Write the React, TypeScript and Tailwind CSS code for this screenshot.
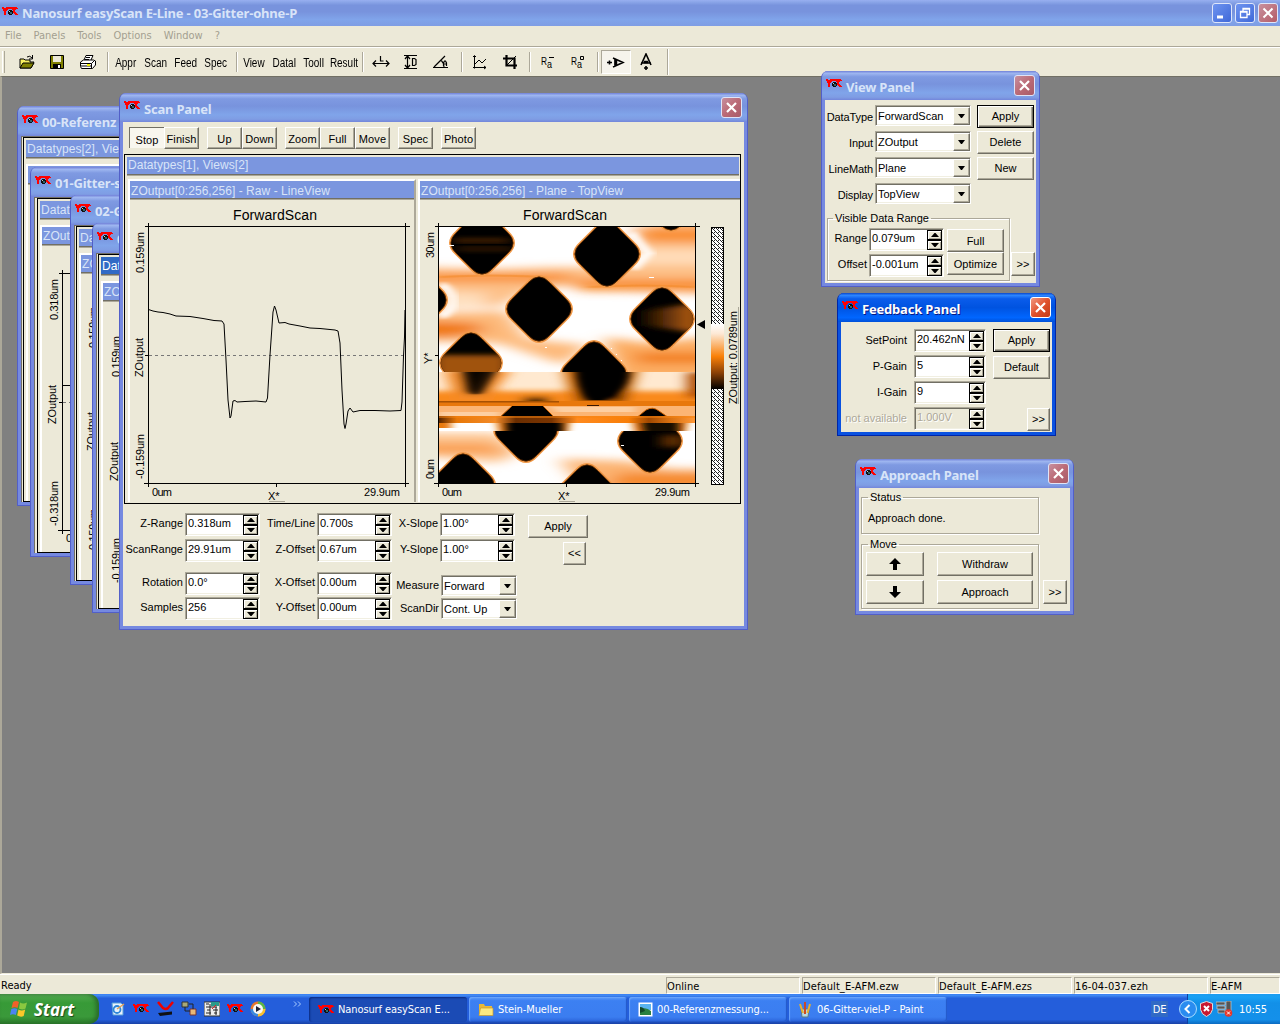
import React from 'react';

const MS = 'font-[Liberation_Sans,Arial,sans-serif]';

function Logo({ className = '' }: { className?: string }) {
  return (
    <svg width="16" height="12" viewBox="0 0 16 12" shapeRendering="crispEdges" className={'shrink-0 ' + className}>
      <path d="M0 1h2v1h2V1h11v1h1v1h-2v1h-1v2h1v1h1v1h1v1h-3V8h-1V7h-1V4h-1V3H6v1H5v1H4v4H2V5H1V3H0z" fill="#f00" />
      <path d="M6 5h1V4h3v1h1v3h-1v1H7V8H6z" fill="#111" />
      <path d="M8 6h2v2H8z" fill="#2f6570" />
      <path d="M7 5h1v1H7z" fill="#ccc" />
    </svg>
  );
}

function Close({ active = false }: { active?: boolean }) {
  return (
    <span className={'flex h-[21px] w-[21px] shrink-0 items-center justify-center rounded-[3px] border ' + (active ? 'border-white bg-linear-to-br from-[#f0977f] via-[#e0512c] to-[#c23a14]' : 'border-[#dfe3f7] bg-linear-to-br from-[#c68f9f] via-[#bb6a76] to-[#a85b68]')}>
      <svg width="13" height="13" viewBox="0 0 13 13"><path d="M2 2l9 9M11 2l-9 9" stroke="#fff" strokeWidth="2.200" /></svg>
    </span>
  );
}

type WinProps = { title: string; box: string; active?: boolean; head: string; close?: boolean; children?: React.ReactNode };
function Win({ title, box, active = false, head, close = true, children }: WinProps) {
  return (
    <section className={'absolute flex flex-col overflow-hidden rounded-t-[7px] border-x border-b px-[3px] pb-[3px] ' + box + (active ? ' border-[#0026a8] bg-[#0a52e0]' : ' border-[#525fc8] bg-[#7589e0]')}>
      <header className={'-mx-[3px] flex shrink-0 items-center pl-1 pr-1 ' + head + (active ? ' bg-[linear-gradient(#0a46c8,#2d86ff_8%,#0a5ceb_20%,#0053e0_50%,#0066ff_85%,#0050d8)]' : ' bg-[linear-gradient(#7080d8,#9eb6f0_8%,#7f9ae2_20%,#7893dd_45%,#80a4ea_75%,#7f9de4_90%,#7386da)]')}>
        <Logo className="-mt-[3px]" />
        <h2 className={'ml-[4px] mt-[3px] grow whitespace-nowrap font-[Noto_Sans,sans-serif] text-[13px] font-bold leading-none tracking-[-0.2px] ' + (active ? 'text-white [text-shadow:1px_1px_#0a1883]' : 'text-[#d8e4f8]')}>{title}</h2>
        {close && <Close active={active} />}
      </header>
      <div className={'relative min-h-0 grow bg-[#ece9d8] text-[11px] leading-none text-black ' + MS}>{children}</div>
    </section>
  );
}

const bevel = 'border border-t-white border-l-white border-b-[#716f64] border-r-[#716f64] shadow-[inset_-1px_-1px_#aca899]';

function Btn({ children, className = '', def = false }: { children: React.ReactNode; className?: string; def?: boolean }) {
  return (
    <button className={'flex shrink-0 items-center justify-center bg-[#ece9d8] leading-none ' + className + (def ? ' border border-black shadow-[inset_1px_1px_#fff,inset_-1px_-1px_#716f64,inset_-2px_-2px_#aca899]' : ' ' + bevel)}>{children}</button>
  );
}

const sunk = 'border border-t-[#aca899] border-l-[#aca899] border-b-white border-r-white shadow-[inset_1px_1px_#716f64,inset_-1px_-1px_#f1efe2]';

function Arrow({ up = false }: { up?: boolean }) {
  return (
    <span className="flex flex-1 items-center justify-center border border-black bg-[#ece9d8] shadow-[inset_1px_1px_#fff,inset_-1px_-1px_#aca899]">
      <svg width="8" height="4" viewBox="0 0 8 4"><path d={up ? 'M3.500 0h1L8 4H0z' : 'M0 0h8L4.500 4h-1z'} /></svg>
    </span>
  );
}

function Spin({ value, className = 'w-[75px]', off = false }: { value: string; className?: string; off?: boolean }) {
  return (
    <div className={'flex h-[23px] shrink-0 justify-between pl-px pt-px ' + sunk + ' ' + className + (off ? ' bg-[#ece9d8] text-[#aca899] [text-shadow:1px_1px_#fff]' : ' bg-white')}>
      <span className="whitespace-nowrap pl-[1px] pt-[3px] text-[11px]">{value}</span>
      <span className="mr-px flex w-[15px] shrink-0 flex-col bg-black"><Arrow up /><Arrow /></span>
    </div>
  );
}

function Combo({ value, className = 'w-[96px]' }: { value: string; className?: string }) {
  return (
    <div className={'flex h-[21px] shrink-0 items-stretch justify-between bg-white pl-[2px] pt-px ' + sunk + ' ' + className}>
      <span className="flex items-center whitespace-nowrap">{value}</span>
      <span className={'flex w-[17px] shrink-0 items-center justify-center bg-[#ece9d8] ' + bevel}>
        <svg width="7" height="4" viewBox="0 0 7 4"><path d="M0 0h7L4 4H3z" /></svg>
      </span>
    </div>
  );
}

function Field({ label, children, className }: { label: string; children: React.ReactNode; className: string }) {
  return (
    <div className={'flex items-start justify-end ' + className}>
      <span className="mr-[2px] whitespace-nowrap pt-[5px]">{label}</span>
      {children}
    </div>
  );
}

function Bar({ children, className = 'bg-[#7b96df] text-[#d8e4f8]', drop = 'pt-[3px]' }: { children: React.ReactNode; className?: string; drop?: string }) {
  return <div className={'h-[18px] shrink-0 overflow-hidden whitespace-nowrap border-b border-[#716f64] pl-px text-[12px] leading-none tracking-[0.05px] shadow-[0_1px_#aca899] ' + drop + ' ' + className}>{children}</div>;
}

/* A document window whose visible part is its left edge. */
function Doc({ title, box, types, pad, deep = false, sub, children }: { title: string; box: string; types: string; pad: string; deep?: boolean; sub: string; children?: React.ReactNode }) {
  return (
    <Win title={title} box={box} head="h-[30px]" close={false}>
      <div className={'flex h-full flex-col border-l border-t border-[#716f64] ' + pad}>
        <div className="flex min-h-0 grow flex-col border border-black pl-[2px] pt-[2px]">
          <Bar className={deep ? 'bg-[#316ac5] text-white' : 'bg-[#7b96df] text-[#d8e4f8]'}>{types}</Bar>
          <div className="mt-[6px] flex min-h-0 grow flex-col border-l-2 border-t-2 border-white">
            <Bar>{sub}</Bar>
            {children}
          </div>
        </div>
      </div>
    </Win>
  );
}

function VText({ x, y, children, size = 11, len }: { x: number; y: number; children: React.ReactNode; size?: number; len?: number }) {
  return <text transform={`translate(${x} ${y}) rotate(-90)`} fontSize={size} textLength={len}>{children}</text>;
}

function LineChart() {
  return (
    <svg className="block" width="284" height="303" viewBox="130 199 284 303" fontFamily="Liberation Sans, Arial, sans-serif">
      <text x="233" y="220" fontSize="14" textLength="84">ForwardScan</text>
      <path d="M145 226.500h265M144 483.500h265M148.500 223v264M405.500 223v264M276.500 484v3M145 355.500h4" stroke="#000" fill="none" shapeRendering="crispEdges" />
      <path d="M149 355.500h256" stroke="#777" strokeDasharray="3 3" shapeRendering="crispEdges" />
      <path d="M148.500 309.500L153 311 158 312 163 312.500 170 314 176 316 190 316.500 203 318.500 214 320.500 222 321 224 324 226 360 228 400 230 418 231 416 233 401 235 400.500 237 402 245 401.500 256 401 266 402 267.500 398 270 355 273 312 274.500 306 276 310 279 323 285 322.500 289 324 300 326 310 328 320 328.500 335 330 338 331 340 343 342 390 344 424 345 428.500 346 424 348 411 350 408 353 412 360 410.500 375 410.500 390 411 401 410.500 402 402 403.500 356 404.500 337 405 310" fill="none" stroke="#000" />
      <VText x={144} y={273} len={41}>0.159um</VText>
      <VText x={143} y={377} len={39}>ZOutput</VText>
      <VText x={144} y={479} len={45}>-0.159um</VText>
      <text x="152" y="496" fontSize="11" textLength="20">0um</text>
      <text x="268" y="500" fontSize="11">X*</text>
      <text x="364" y="496" fontSize="11" textLength="36">29.9um</text>
      <path d="M269 501.500h16" stroke="#aca899" />
    </svg>
  );
}

/* Square pit turned by 45 degrees, with rounded tips at distance r from its centre. */
const dia = (cx: number, cy: number, r: number) => {
  const a = r - 6;
  const t = r + 6;
  return `M${cx - a} ${cy - 11}L${cx - 11} ${cy - a}Q${cx} ${cy - t} ${cx + 11} ${cy - a}L${cx + a} ${cy - 11}Q${cx + t} ${cy} ${cx + a} ${cy + 11}L${cx + 11} ${cy + a}Q${cx} ${cy + t} ${cx - 11} ${cy + a}L${cx - a} ${cy + 11}Q${cx - t} ${cy} ${cx - a} ${cy - 11}z`;
};

const UPPER = [[43, 16, 32], [168, 27, 33], [100, 82, 33], [223, 92, 32], [32, 136, 31], [155, 147, 33], [-23, 73, 31], [232, -26, 30], [282, 160, 32]];
const LOWER = [[87, 203, 32], [211, 214, 32], [24, 258, 32], [148, 269, 32]];

function Pits({ list, clip }: { list: number[][]; clip: string }) {
  return (
    <g clipPath={clip}>
      {list.map(([x, y, r], i) => <path key={i} d={dia(x, y, r)} fill="#c86a18" stroke="#f29a48" strokeWidth="2" />)}
      {list.map(([x, y, r], i) => <path key={i} d={dia(x, y, r - 0.8)} fill="#000" stroke="#6a3000" strokeWidth=".8" />)}
    </g>
  );
}

function Topography() {
  return (
    <g transform="translate(439 227)">
      <defs>
        <clipPath id="all"><path d="M0 0h256v256H0z" /></clipPath>
        <clipPath id="upper"><path d="M0 0h256v145H0z" /></clipPath>
        <clipPath id="smear"><path d="M0 145h256v29H0z" /></clipPath>
        <clipPath id="mid"><path d="M0 179h256v10H0z" /></clipPath>
        <clipPath id="mid2"><path d="M0 196h256v8H0z" /></clipPath>
        <clipPath id="lower"><path d="M0 204h256v52H0z" /></clipPath>
        <clipPath id="d1"><path d={dia(43, 16, 30)} /></clipPath>
        <clipPath id="d4"><path d={dia(223, 92, 31)} /></clipPath>
        <clipPath id="d5"><path d={dia(32, 136, 30)} /></clipPath>
        <clipPath id="d10"><path d={dia(211, 214, 31)} /></clipPath>
        <filter id="b6" x="-50%" y="-100%" width="200%" height="300%"><feGaussianBlur stdDeviation="10 4" /></filter>
        <filter id="b3" x="-50%" y="-50%" width="200%" height="200%"><feGaussianBlur stdDeviation="7 2.500" /></filter>
        <filter id="b4" x="-50%" y="-50%" width="200%" height="200%"><feGaussianBlur stdDeviation="4 0.6" /></filter>
        <linearGradient id="band"><stop stopColor="#5a2600" /><stop offset=".07" stopColor="#e87808" /><stop offset=".22" stopColor="#f28a28" /><stop offset=".3" stopColor="#6a2d00" /><stop offset=".44" stopColor="#7a3400" /><stop offset=".54" stopColor="#ff8a1e" /><stop offset=".74" stopColor="#f87e08" /><stop offset=".82" stopColor="#a04800" /><stop offset=".9" stopColor="#d87010" /><stop offset="1" stopColor="#ff9838" /></linearGradient>
        <linearGradient id="warm" x1="0" x2="1"><stop stopColor="#000" /><stop offset="1" stopColor="#c46410" /></linearGradient>
      </defs>
      <g clipPath="url(#all)">
        <path d="M0 0h256v256H0z" fill="#fff" />
        <g clipPath="url(#upper)">
          <g filter="url(#b6)">
            <path d="M-30 40L60 42 110 40 180 40 200 0 290 -20V68L180 64 130 58 84 66 60 80 -30 80z" fill="#fdbf86" />
            <path d="M195 1h90v14h-80zM130 52h150v12H140z" fill="#f98f30" />
            <path d="M190 22h90v16h-90z" fill="#ffdcb8" />
            <path d="M-30 46h160v9H-30z" fill="#f98f30" />
            <path d="M-30 64L50 66 44 80 -30 84z" fill="#fedfbe" />
            <path d="M-30 86L68 84 88 112 150 118 125 138 60 116 -30 114z" fill="#fdb97a" />
            <path d="M-30 94L34 96 50 103 10 110 -30 110z" fill="#f07606" />
            <path d="M165 110L210 116 290 108V152H180z" fill="#fcac60" />
            <path d="M195 126h90v10h-85z" fill="#f27c0c" />
          </g>
          <path d="M0 50q50-3 105 0M150 60q50-3 106 0" stroke="#f28620" strokeWidth="2" opacity=".5" fill="none" filter="url(#b4)" />
          <path d="M192 6l17 20-15 16" stroke="#fff" strokeWidth="8" fill="none" filter="url(#b4)" />
          <path d="M2 57q12 8 12 17t-12 16" stroke="#fff" strokeWidth="7" fill="none" filter="url(#b4)" />
        </g>
        <g clipPath="url(#smear)">
          <path d="M0 145h256v29H0z" fill="#ffe9d0" />
          <g filter="url(#b3)">
            <path d="M-20 164h296v16H-20z" fill="#f98a1e" />
            <path d="M84 170h26v8H84z" fill="#200b00" />
            <path d="M6 143h66L48 174H16z" fill="#f58a28" />
            <path d="M122 135h80l-14 44h-54z" fill="#d66a00" />
            <path d="M248 145h20v26h-20z" fill="#b04c00" />
            <path d="M20 137h38L42 167H28z" fill="#200b00" />
            <path d="M134 132h58L184 174h-42z" fill="#000" />
          </g>
          <path d="M26 142h32L42 166q-8 4-12-2z" fill="#000" opacity=".75" filter="url(#b4)" />
          <path d="M138 138h52q2 18-13 28l-10 7h-18q-11-14-11-31z" fill="#000" filter="url(#b4)" />
        </g>
        <path d="M0 174h256v5H0z" fill="#e8780c" />
        <path d="M0 174h120v1.500H0z" fill="#8a4000" opacity=".7" />
        <path d="M148 178h12v1h-12z" fill="#3a1600" />
        <path d="M0 179h256v10H0z" fill="#fcb574" />
        <path d="M0 185h60v4H0zM112 180h84v5h-78z" fill="#fdcfa2" filter="url(#b4)" />
        <g clipPath="url(#mid)" stroke="#c85f00">
          <path d="M59 192l15-14h29l15 15zM196 192l11-9q7-4 13 1l13 9z" fill="#000" />
        </g>
        <path d="M0 189h256v7H0z" fill="url(#band)" />
        <path d="M0 189h256v2H0z" fill="#f88410" opacity=".5" />
        <path d="M0 196h256v8H0z" fill="#fff" />
        <g clipPath="url(#mid2)">
          <path d="M-8 193h20v8H-8zM56 190h76l-4 16H60z" fill="#e87808" filter="url(#b4)" />
          <path d="M66 188h58v22H68z" fill="#000" filter="url(#b4)" />
          <path d="M192 190h58l-4 16h-50z" fill="#e0720c" filter="url(#b4)" />
          <path d="M202 192h38v16h-34z" fill="#140800" filter="url(#b4)" />
        </g>
        <g clipPath="url(#lower)">
          <g filter="url(#b6)">
            <path d="M-30 206h90l20 20-20 10-90-8z" fill="#fdc48f" />
            <path d="M-30 217h80l20 9h-100z" fill="#f99a44" />
            <path d="M120 232l70 2 40 8h60v24H150z" fill="#fcb472" />
            <path d="M180 246h110v15H170z" fill="#f5892b" />
          </g>
        </g>
        <Pits list={UPPER} clip="url(#upper)" />
        <Pits list={LOWER} clip="url(#lower)" />
        <g clipPath="url(#d1)"><path d="M14 12h56v3H14zM18 21h56v2H18z" fill="#6a3208" filter="url(#b3)" /></g>
        <path d="M14 17h58v1.500H14z" fill="#000" />
        <g clipPath="url(#d4)"><path d="M200 84l60-8v30l-60-8z" fill="url(#warm)" filter="url(#b3)" /></g>
        <g clipPath="url(#upper)"><g clipPath="url(#d5)"><path d="M-6 128h76v22H-6z" fill="#a0520e" filter="url(#b3)" /></g></g>
        <g clipPath="url(#lower)"><g clipPath="url(#d10)"><path d="M222 208h24v12h-24z" fill="#5a2a06" filter="url(#b3)" /></g></g>
        <path d="M10 18.500h5M210 50.500h5M106 120.500h2M182 218.500h3M172 121.500h1M177 127.500h1M182 133.500h1" stroke="#fff" fill="none" />
      </g>
    </g>
  );
}

function TopView() {
  return (
    <svg className="block" width="319" height="303" viewBox="420 199 319 303" fontFamily="Liberation Sans, Arial, sans-serif">
      <defs>
        <pattern id="dots" width="4" height="4" patternUnits="userSpaceOnUse">
          <path d="M0 0h4v4H0z" fill="#fff" /><path d="M0 0h1v1H0zM2 2h1v1H2zM2 0h1v1H2zM1 1h1v1H1zM3 3h1v1H3z" fill="#222" />
        </pattern>
        <linearGradient id="scale" x2="0" y2="1"><stop stopColor="#fff" /><stop offset=".15" stopColor="#fde8d4" /><stop offset=".5" stopColor="#f98008" /><stop offset=".75" stopColor="#8a4006" /><stop offset="1" stopColor="#000" /></linearGradient>
      </defs>
      <text x="523" y="220" fontSize="14" textLength="84">ForwardScan</text>
      <Topography />
      <path d="M435 226.500h265M434 483.500h265M438.500 223v264M695.500 223v264M566.500 484v3M435 355.500h4" stroke="#000" fill="none" shapeRendering="crispEdges" />
      <path d="M711.500 227.500h12v257h-12z" fill="url(#dots)" stroke="#000" shapeRendering="crispEdges" />
      <path d="M711 324h13v65h-13z" fill="url(#scale)" />
      <path d="M697 324.500l8-4.500v9z" />
      <path d="M738.500 307v97" stroke="#aca899" />
      <VText x={434} y={258} len={26}>30um</VText>
      <VText x={432} y={364}>Y*</VText>
      <VText x={434} y={479} len={20}>0um</VText>
      <VText x={737} y={404} len={93}>ZOutput: 0.0789um</VText>
      <text x="442" y="496" fontSize="11" textLength="20">0um</text>
      <text x="558" y="500" fontSize="11">X*</text>
      <text x="655" y="496" fontSize="11" textLength="35">29.9um</text>
      <path d="M559 501.500h16" stroke="#aca899" />
    </svg>
  );
}

function ScanPanel() {
  const groups = [['Stop', 'Finish'], ['Up', 'Down'], ['Zoom', 'Full', 'Move'], ['Spec'], ['Photo']];
  return (
    <Win title="Scan Panel" box="left-[119px] top-[93px] h-[537px] w-[629px]" head="h-[29px] pr-[5px]">
      <div className="flex gap-2 pl-[6px] pt-[5px] text-[11px] tracking-[0.1px]">
        {groups.map((g, i) => (
          <div key={i} className="flex">
            {g.map((b) => (
              b === 'Stop'
                ? <button key={b} className="flex h-[21px] w-[35px] items-end justify-center border-l border-t border-[#716f64] bg-[#f8f6ee] pb-[2px]">{b}</button>
                : <Btn key={b} className="h-[22px] w-[35px] pt-[2px]">{b}</Btn>
            ))}
          </div>
        ))}
      </div>
      <div className="ml-px mt-[5px] flex h-[350px] w-[617px] flex-col border border-black pl-[2px] pt-[2px]">
        <div className="mr-[1px]"><Bar drop="pt-[2px]">Datatypes[1], Views[2]</Bar></div>
        <div className="mt-[4px] flex">
          <div className="ml-px w-[288px] shrink-0 border-l-2 border-r-2 border-t-2 border-l-white border-r-[#aca899] border-t-white">
            <Bar drop="pt-[4px]">ZOutput[0:256,256] - Raw - LineView</Bar>
            <LineChart />
          </div>
          <div className="ml-[2px] min-w-0 grow overflow-hidden border-l-2 border-t-2 border-white">
            <Bar drop="pt-[4px]">ZOutput[0:256,256] - Plane - TopView</Bar>
            <TopView />
          </div>
        </div>
      </div>
      <div className="flex items-start pl-px pt-[9px]">
        <div className="flex w-[136px] flex-col items-end">
          <Field className="h-[26px]" label="Z-Range"><Spin value="0.318um" /></Field>
          <Field className="h-[33px]" label="ScanRange"><Spin value="29.91um" /></Field>
          <Field className="h-[25px]" label="Rotation"><Spin value="0.0°" /></Field>
          <Field className="h-[23px]" label="Samples"><Spin value="256" /></Field>
        </div>
        <div className="flex w-[132px] flex-col items-end">
          <Field className="h-[26px]" label="Time/Line"><Spin value="0.700s" /></Field>
          <Field className="h-[33px]" label="Z-Offset"><Spin value="0.67um" /></Field>
          <Field className="h-[25px]" label="X-Offset"><Spin value="0.00um" /></Field>
          <Field className="h-[23px]" label="Y-Offset"><Spin value="0.00um" /></Field>
        </div>
        <div className="flex w-[125px] flex-col items-end">
          <Field className="mr-[2px] h-[26px]" label="X-Slope"><Spin value="1.00°" /></Field>
          <Field className="mr-[2px] h-[36px]" label="Y-Slope"><Spin value="1.00°" /></Field>
          <Field className="h-[23px]" label="Measure"><Combo value="Forward" className="w-[76px]" /></Field>
          <Field className="h-[23px]" label="ScanDir"><Combo value="Cont. Up" className="w-[76px]" /></Field>
        </div>
        <div className="ml-[11px] mt-[2px] flex w-[60px] flex-col">
          <Btn className="h-[23px] w-[60px]">Apply</Btn>
          <Btn className="ml-[35px] mt-1 h-[23px] w-[23px]">&lt;&lt;</Btn>
        </div>
      </div>
    </Win>
  );
}

const group = 'border border-[#aca899] shadow-[inset_1px_1px_#fff,1px_1px_#fff]';

function ViewPanel() {
  const rows = [['DataType', 'ForwardScan', 'Apply'], ['Input', 'ZOutput', 'Delete'], ['LineMath', 'Plane', 'New'], ['Display', 'TopView', '']];
  return (
    <Win title="View Panel" box="left-[821px] top-[71px] h-[216px] w-[219px]" head="h-[29px]">
      <div className="flex flex-col pt-[5px]">
        {rows.map(([l, v, b]) => (
          <div key={l} className="flex h-[26px] items-start">
            <span className="mr-[2px] w-[48px] whitespace-nowrap pt-[7px] text-right tracking-[-0.1px]">{l}</span>
            <Combo value={v} className="w-[96px]" />
            {b && <Btn def={b === 'Apply'} className="ml-[6px] h-[23px] w-[57px]">{b}</Btn>}
          </div>
        ))}
      </div>
      <div className="flex items-end pl-[2px]">
        <fieldset className={'mt-[4px] h-[68px] w-[183px] px-1 ' + group}>
          <legend className="ml-[1px] px-[2px]">Visible Data Range</legend>
          <div className="flex gap-[3px] pt-[4px]">
            <div className="flex w-[112px] flex-col items-end gap-[3px]">
              <Field label="Range" className=""><Spin value="0.079um" /></Field>
              <Field label="Offset" className=""><Spin value="-0.001um" /></Field>
            </div>
            <div className="flex flex-col pt-px"><Btn className="h-[23px] w-[57px] pt-px">Full</Btn><Btn className="h-[23px] w-[57px] pt-px">Optimize</Btn></div>
          </div>
        </fieldset>
        <Btn className="mb-[5px] ml-[1px] h-[24px] w-[24px]">&gt;&gt;</Btn>
      </div>
    </Win>
  );
}

function FeedbackPanel() {
  return (
    <Win active title="Feedback Panel" box="left-[837px] top-[293px] h-[143px] w-[219px]" head="h-[29px]">
      <div className="flex gap-[6px] pt-[7px]">
        <div className="flex w-[145px] flex-col gap-[3px]">
          {[['SetPoint', '20.462nN'], ['P-Gain', '5'], ['I-Gain', '9'], ['not available', '1.000V']].map(([l, v], i) => (
            <div key={l} className={'flex justify-end ' + (i === 3 ? 'text-[#aca899] [text-shadow:1px_1px_#fff]' : '')}>
              <span className="mr-[7px] pt-[6px]">{l}</span>
              <Spin value={v} off={i === 3} className="w-[72px]" />
            </div>
          ))}
        </div>
        <div className="flex w-[58px] flex-col items-end">
          <Btn def className="h-[23px] w-[57px]">Apply</Btn>
          <Btn className="mt-1 h-[23px] w-[57px]">Default</Btn>
          <Btn className="mt-[29px] h-[23px] w-[23px]">&gt;&gt;</Btn>
        </div>
      </div>
    </Win>
  );
}

function Move({ down = false }: { down?: boolean }) {
  return <Btn className="h-[24px] w-[58px]"><svg width="12" height="12" viewBox="0 0 12 12" className={down ? 'rotate-180' : ''}><path d="M6 0l6 6H8v6H4V6H0z" /></svg></Btn>;
}

function ApproachPanel() {
  return (
    <Win title="Approach Panel" box="left-[855px] top-[459px] h-[156px] w-[219px]" head="h-[29px]">
      <div className="flex h-full items-end pb-[2px] pl-[2px]">
        <div className="w-[178px]">
          <fieldset className={'h-[42px] pl-[6px] ' + group}>
            <legend className="px-[2px]">Status</legend>
            <p className="pt-[10px]">Approach done.</p>
          </fieldset>
          <fieldset className={'mt-[5px] h-[70px] px-1 ' + group}>
            <legend className="ml-[2px] px-[2px]">Move</legend>
            <div className="grid grid-cols-[71px_96px] gap-y-1 pt-[2px]">
              <Move /><Btn className="h-[24px] w-[96px]">Withdraw</Btn>
              <Move down /><Btn className="h-[24px] w-[96px]">Approach</Btn>
            </div>
          </fieldset>
        </div>
        <Btn className="mb-[5px] ml-[4px] h-[24px] w-[24px]">&gt;&gt;</Btn>
      </div>
    </Win>
  );
}

const Sep = () => <span className="h-[20px] w-[2px] shrink-0 border-l border-r border-l-[#aca899] border-r-white" />;
const Tool = ({ children }: { children: React.ReactNode }) => <button className="flex h-[24px] w-[30px] shrink-0 items-center justify-center whitespace-nowrap">{children}</button>;
const Caption = ({ children }: { children: string }) => <Tool><span className="scale-x-[0.83] pt-[2px]">{children}</span></Tool>;
const Ink = ({ d, w = 1, children }: { d: string; w?: number; children?: React.ReactNode }) => (
  <svg width="18" height="16" viewBox="0 0 18 16" fill="none" stroke="#000" strokeWidth={w}><path d={d} />{children}</svg>
);

function Toolbar() {
  return (
    <div className="flex h-[28px] shrink-0 items-center bg-[#ece9d8] pl-[2px] font-[Liberation_Sans,sans-serif] text-[12px] leading-none">
      <span className="mr-[7px] h-[22px] w-[3px] border-l border-r border-l-white border-r-[#aca899]" />
      <Tool>
        <svg width="16" height="14" viewBox="0 0 16 14"><path d="M1 4h4l1 1h5v2h4l-3 6H1z" fill="#f8f060" stroke="#000" /><path d="M4 8h11l-3 5H1z" fill="#808000" stroke="#000" /><path d="M8 2q3-2 5 1M13.500 0v4H10" stroke="#000" fill="none" /></svg>
      </Tool>
      <Tool><svg width="14" height="14" viewBox="0 0 14 14"><path d="M.5.5h13v13h-13z" fill="#808000" stroke="#000" /><path d="M3 1h8v6H3z" fill="#ece9d8" /><path d="M3 9h8v4H3z" /><path d="M8 10h2v3H8z" fill="#fff" /></svg></Tool>
      <Tool><svg width="17" height="15" viewBox="0 0 17 15"><path d="M5 5l2-4.500h7L12 5M1.500 7l3-2h10l2 1v4l-3 3.500h-11l-1-2z" fill="#fff" stroke="#000" /><path d="M1.500 8.500h11l3-3M12.500 8.500v5M7 2.500h4M6 4.500h4M2 11h10" stroke="#000" fill="none" /><path d="M8 10h3" stroke="#ee0" strokeWidth="2" /></svg></Tool>
      <span className="w-[5px]" /><Sep /><span className="w-[2px]" />
      {['Appr', 'Scan', 'Feed', 'Spec'].map((t) => <Caption key={t}>{t}</Caption>)}
      <span className="w-[5px]" /><Sep /><span className="w-[1px]" />
      {['View', 'DataI', 'ToolI', 'Result'].map((t) => <Caption key={t}>{t}</Caption>)}
      <span className="w-[3px]" /><Sep /><span className="w-[2px]" />
      <Tool><Ink d="M1 9.500h16M4 6.500l-3 3 3 3M14 6.500l3 3-3 3M8.500 2v5h3" w={1.200} /></Tool>
      <Tool><Ink d="M2 1.500h13M2 14.500h13M5.500 2v12M3 5l2.500-3L8 5M3 11l2.500 3L8 11M10.500 4.500h2l1.500 1v5l-1.500 1h-2z" w={1.200} /></Tool>
      <Tool><Ink d="M1 13.500h15M2 13L13 2M9 6q3 3 3 7M11.500 12V9l1-2h1l1 2v3M11 10h4" w={1.200} /></Tool>
      <span className="w-[5px]" /><Sep /><span className="w-[2px]" />
      <Tool><Ink d="M3.500 2v12.500M2 13.500h13M2 3l1.500-1.500L5 3M13 12l2 1.500-2 1.500M4 10l4-4 3 3 4-4" /></Tool>
      <Tool><Ink d="M2 4.500h11.500V15M5.500 1v10.500H16" w={2.200}><path d="M6 11L15 2" strokeWidth="1" /></Ink></Tool>
      <span className="w-[4px]" /><Sep /><span className="w-[2px]" />
      {[0, 1].map((k) => (
        <Tool key={k}>
          <svg width="14" height="15" viewBox="0 0 14 15" fontFamily="Liberation Sans" fontSize="10.500">
            <text x="0" y="10" textLength="6" lengthAdjust="spacingAndGlyphs">R</text><text x="6" y="13" textLength="5" lengthAdjust="spacingAndGlyphs">a</text>
            {k === 0 ? <path d="M8 2.500h5" stroke="#000" /> : <path d="M9.500 1.500h3v3h-3z" stroke="#000" fill="none" />}
          </svg>
        </Tool>
      ))}
      <span className="w-[4px]" /><Sep /><span className="w-[2px]" />
      <button className="flex h-[24px] w-[30px] items-center justify-center border border-b-white border-l-[#aca899] border-r-white border-t-[#aca899] bg-[#f6f4ec]"><Ink d="M6 4l10 4.500L6 13M8 5v7M0 8.500h5M2.500 6.500v4" w={1.600}><path d="M8 6h2v5H8z" fill="#000" strokeWidth=".5" /></Ink></button>
      <Tool><svg width="14" height="18" viewBox="0 0 14 18" fill="none" stroke="#000" strokeWidth="1.600"><path d="M2 12L7 1l5 11M2 10h10M7 13v4M5 15h4" /><path d="M5 8h4v2H5z" fill="#000" strokeWidth=".5" /></svg></Tool>
      <span className="ml-[6px] h-[26px] w-[2px] border-l border-r border-l-[#aca899] border-r-white" />
    </div>
  );
}

function CapBtn({ kind }: { kind: 'min' | 'max' | 'close' }) {
  return (
    <span className={'flex h-[20px] w-[20px] items-center justify-center rounded-[3px] border border-[#dfe6fa] ' + (kind === 'close' ? 'bg-linear-to-br from-[#c8909d] to-[#b45c68]' : 'bg-linear-to-br from-[#6f94f0] to-[#4068d8]')}>
      <svg width="12" height="12" viewBox="0 0 12 12" fill="none" stroke="#fff">
        {kind === 'min' && <path d="M1 10h6" strokeWidth="3" />}
        {kind === 'max' && <path d="M4 4V1.500h6.500v6H8M1.500 4.500H8v6H1.500zM1 5h7M4 2h7" strokeWidth="1.300" />}
        {kind === 'close' && <path d="M1.500 1.500l9 9M10.500 1.500l-9 9" strokeWidth="2" />}
      </svg>
    </span>
  );
}

function Task({ icon, children, on = false }: { icon: React.ReactNode; children: React.ReactNode; on?: boolean }) {
  return (
    <button className={'mt-[3px] flex h-[25px] w-[158px] shrink-0 items-center gap-[4px] rounded-[3px] pl-[9px] text-white ' + (on ? 'bg-[#1b4bb5] shadow-[inset_1px_1px_2px_#0a2a80]' : 'bg-[linear-gradient(#5c9bfa,#3c80f2_15%,#3b7df0_80%,#2a62d8)] shadow-[inset_-1px_-1px_1px_#2358c8,inset_1px_1px_1px_#6aa4fa]')}>
      {icon}<span className="whitespace-nowrap">{children}</span>
    </button>
  );
}

const TAHOMA = 'font-[DejaVu_Sans_Condensed,DejaVu_Sans,sans-serif]';

function Taskbar() {
  return (
    <footer className={'flex h-[30px] shrink-0 items-stretch bg-[linear-gradient(#3a80f4,#4088f2_5%,#245edb_14%,#245edb_85%,#1941a5)] text-[11px] leading-none tracking-[-0.1px] ' + TAHOMA}>
      <div className="flex w-[99px] items-center gap-[5px] rounded-r-[10px] bg-[linear-gradient(#5aa858,#4aa548_10%,#379a37_30%,#3a993a_75%,#2a7a2a)] pl-[10px] shadow-[inset_-3px_0_4px_#2a6a2a]">
        <svg width="19" height="18" viewBox="0 0 19 18">
          <path d="M3 2q3-2 6 0L7.500 8Q5 6.500 1.500 8z" fill="#f0602a" /><path d="M10 2.500q3 2 7 0L15.500 8.500q-3 2-6.500 0z" fill="#8ac840" />
          <path d="M1.300 9Q4.500 7.500 7.300 9L5.800 15Q3 13.500 0 15z" fill="#4c84f0" /><path d="M8.500 9.500q3 2 6.700 0L13.700 16q-3 1.500-6.500-.5z" fill="#fbc82a" />
        </svg>
        <span className="font-[Open_Sans,sans-serif] text-[17px] font-bold italic tracking-[0px] text-white [text-shadow:1px_1px_1px_#1a4a1a]">Start</span>
      </div>
      <div className="flex w-[210px] items-center pl-[11px]">
        <svg className="mr-[7px]" width="16" height="16" viewBox="0 0 16 16"><path d="M2 2h9l2 2v10H3z" fill="#e8f2fc" stroke="#58a0d8" /><circle cx="7" cy="8.500" r="3.500" fill="none" stroke="#2e86d8" strokeWidth="1.800" /><path d="M7 8l7-5" stroke="#e8a050" strokeWidth="1.500" /></svg>
        <Logo className="mr-[8px]" />
        <svg className="mr-[7px]" width="17" height="16" viewBox="0 0 17 16"><path d="M1 1l5 6q3 2 5 0l5-6" stroke="#e00" strokeWidth="2.500" fill="none" /><path d="M1 12l14-1.500v3L3 15z" fill="#111" /></svg>
        <svg className="mr-[7px]" width="16" height="16" viewBox="0 0 16 16"><path d="M1 1h6v5H1z" fill="#a8a878" stroke="#333" /><path d="M9 8h6v6H9z" fill="#e8b878" stroke="#733" /><path d="M4 6v4h5M8 3h4v5" stroke="#222" fill="none" /></svg>
        <svg className="mr-[7px]" width="16" height="16" viewBox="0 0 16 16"><path d="M0 1h16v14H0z" fill="#eee" stroke="#333" /><path d="M7 1h8v4H7z" fill="#2a9a8a" /><path d="M2 3h3M2 6h11M3 9h3M9 9h5M2 12h5M10 12h3M6 3v11M12 6v8" stroke="#222" /><path d="M8 8l4-4" stroke="#d22" /></svg>
        <Logo className="mr-[7px]" />
        <svg width="16" height="16" viewBox="0 0 16 16"><circle cx="8" cy="8" r="7.500" fill="#e8782a" /><path d="M8 .5A7.500 7.500 0 0 1 15.500 8H8z" fill="#58b848" /><path d="M15.500 8A7.500 7.500 0 0 1 8 15.500V8z" fill="#f8c030" /><path d="M.5 8A7.500 7.500 0 0 0 8 15.500V8z" fill="#3a8ae0" /><circle cx="8" cy="8" r="5" fill="#f8f8f8" /><path d="M6 5l5 3-5 3z" fill="#223" /></svg>
        <svg className="mb-[10px] ml-[27px]" width="9" height="6" viewBox="0 0 9 6" fill="none" stroke="#a8ccff"><path d="M1 .5L3.500 3 1 5.500M5 .5L7.500 3 5 5.500" /></svg>
      </div>
      <div className="flex w-[842px] gap-[2px]">
        <Task on icon={<Logo />}>Nanosurf easyScan E...</Task>
        <Task icon={<svg width="16" height="14" viewBox="0 0 16 14"><path d="M1 1h5l1 2h7v9H1z" fill="#e8b838" /><path d="M2.500 5H15v7.500H1z" fill="#fce880" stroke="#c89828" strokeWidth=".7" /></svg>}>Stein-Mueller</Task>
        <Task icon={<svg width="15" height="15" viewBox="0 0 15 15"><path d="M.5.5h14v14H.5z" fill="#fff" /><path d="M2 2h11v6H2z" fill="#5ab4f0" /><path d="M2 8q5-4 11 1v4H2z" fill="#2a8040" /><path d="M2 5q4 0 5 4l-5 2z" fill="#124828" /></svg>}>00-Referenzmessung...</Task>
        <Task icon={<svg width="15" height="16" viewBox="0 0 15 16"><path d="M3 7h8l-1 8H4z" fill="#b8d8e0" stroke="#5a7a88" /><path d="M5 11L2 2M9.500 11L12 2" stroke="#e8b030" strokeWidth="2" /><path d="M7 12V0" stroke="#c84a28" strokeWidth="2" /></svg>}>06-Gitter-viel-P - Paint</Task>
      </div>
      <div className="flex w-[36px] items-center"><span className="flex h-[16px] w-[17px] items-center justify-center bg-[#316ac5] text-white">DE</span></div>
      <div className="flex grow items-center border-l border-[#1040a0] bg-[linear-gradient(#1c9cf0,#18a0f4_10%,#1290e8_30%,#1490ea_85%,#0c6ac0)] text-white">
        <svg className="-ml-[9px] shrink-0" width="18" height="18" viewBox="0 0 18 18"><circle cx="9" cy="9" r="8.500" fill="#2a8cf0" stroke="#a8dcff" /><path d="M10.500 5L6.500 9l4 4" stroke="#fff" strokeWidth="2" fill="none" /></svg>
        <svg className="ml-[3px] shrink-0" width="13" height="16" viewBox="0 0 13 16"><path d="M6.500.5l6 2v6q-1 5-6 7-5-2-6-7v-6z" fill="#c81830" stroke="#ddd" /><path d="M4 5l5 5M9 5l-5 5" stroke="#fff" strokeWidth="2" /></svg>
        <svg className="ml-[3px] shrink-0" width="17" height="16" viewBox="0 0 17 16"><path d="M0 1h9v3H0zM1 5h8v3H1zM2 9h7v3H2zM10 0h5v14h-5z" fill="#555" stroke="#ccc" strokeWidth=".7" /><circle cx="12.500" cy="12" r="3.800" fill="#e83828" /><path d="M11 10.500l3 3M14 10.500l-3 3" stroke="#fff" /></svg>
        <span className="ml-[6px]">10:55</span>
      </div>
    </footer>
  );
}

export default function App() {
  return (
    <main className="flex h-[1024px] w-[1280px] flex-col overflow-hidden bg-[#ece9d8] text-black">
      <header className="flex h-[26px] shrink-0 items-center bg-[linear-gradient(#98aff0,#8aa5e8_8%,#7893dd_20%,#7893dd_45%,#80a4ea_75%,#7f9de4)] pl-[2px] pr-[2px]">
        <Logo className="-mt-[2px]" />
        <h1 className="ml-[4px] grow font-[Noto_Sans,sans-serif] text-[13px] font-bold leading-none tracking-[-0.19px] text-[#d8e4f8]">Nanosurf easyScan E-Line - 03-Gitter-ohne-P</h1>
        <div className="flex gap-[3px]"><CapBtn kind="min" /><CapBtn kind="max" /><CapBtn kind="close" /></div>
      </header>
      <nav className={'flex h-[20px] shrink-0 items-center gap-[12px] pb-[2px] pl-[5px] text-[11px] leading-none text-[#a39f90] ' + TAHOMA}>
        {['File', 'Panels', 'Tools', 'Options', 'Window', '?'].map((m) => <span key={m}>{m}</span>)}
      </nav>
      <div className="h-[2px] shrink-0 border-b border-t border-b-white border-t-[#aca899]" />
      <Toolbar />
      <div className="relative min-h-0 grow overflow-hidden border-b border-l-2 border-t border-b-[#ece9d8] border-l-[#aca899] border-t-[#716f64] bg-[#808080]" />
      <div className={'flex h-[20px] shrink-0 items-end border-t border-white text-[11px] leading-none ' + TAHOMA}>
        <span className="w-[666px] pb-[3px] pl-[1px]">Ready</span>
        {['Online', 'Default_E-AFM.ezw', 'Default_E-AFM.ezs', '16-04-037.ezh', 'E-AFM'].map((s, i) => (
          <span key={s} className={'flex h-[17px] shrink-0 items-center border border-b-white border-l-[#aca899] border-r-white border-t-[#aca899] pt-px tracking-[0.1px] ' + (i === 4 ? 'w-[70px]' : 'mr-[2px] w-[134px]')}>{s}</span>
        ))}
      </div>
      <Taskbar />

      <Doc title="00-Referenz" box="left-[17px] top-[106px] h-[400px] w-[160px]" types="Datatypes[2], Views" pad="pl-px" sub="" />
      <Doc title="01-Gitter-s" box="left-[30px] top-[167px] h-[390px] w-[130px]" types="Datatypes[2]" pad="pl-[2px]" sub="ZOutput">
        <svg className="block shrink-0" width="100" viewBox="41 244 100 298" height="298" fontFamily="Liberation Sans, Arial, sans-serif">
          <path d="M58 272.500h60M61.500 269v264M57 529.500h60M62 384.500h50M58 401.500h3" stroke="#000" fill="none" />
          <path d="M62 401.500h60" stroke="#777" strokeDasharray="3 3" />
          <VText x={57} y={319} len={41}>0.318um</VText><VText x={55} y={423} len={39}>ZOutput</VText><VText x={57} y={525} len={45}>-0.318um</VText>
          <text x="65" y="541" fontSize="11">0um</text>
        </svg>
      </Doc>
      <Doc title="02-Gitter" box="left-[70px] top-[195px] h-[390px] w-[110px]" types="Datatypes[2]" pad="pl-px" sub="ZOutput">
        <svg className="block shrink-0" width="100" viewBox="79 272 100 298" height="298" fontFamily="Liberation Sans, Arial, sans-serif">
          <VText x={95} y={347} len={41}>0.159um</VText><VText x={93} y={450} len={39}>ZOutput</VText><VText x={95} y={549} len={41}>0.159um</VText>
        </svg>
      </Doc>
      <Doc title="03-Gitter" box="left-[92px] top-[223px] h-[390px] w-[110px]" types="Datatypes[2]" pad="pl-px" deep sub="ZOutput">
        <svg className="block shrink-0" width="100" viewBox="102 300 100 298" height="298" fontFamily="Liberation Sans, Arial, sans-serif">
          <VText x={119} y={376} len={41}>0.159um</VText><VText x={117} y={480} len={39}>ZOutput</VText><VText x={119} y={582} len={45}>-0.159um</VText>
        </svg>
      </Doc>
      <ScanPanel />
      <ViewPanel />
      <FeedbackPanel />
      <ApproachPanel />
    </main>
  );
}
